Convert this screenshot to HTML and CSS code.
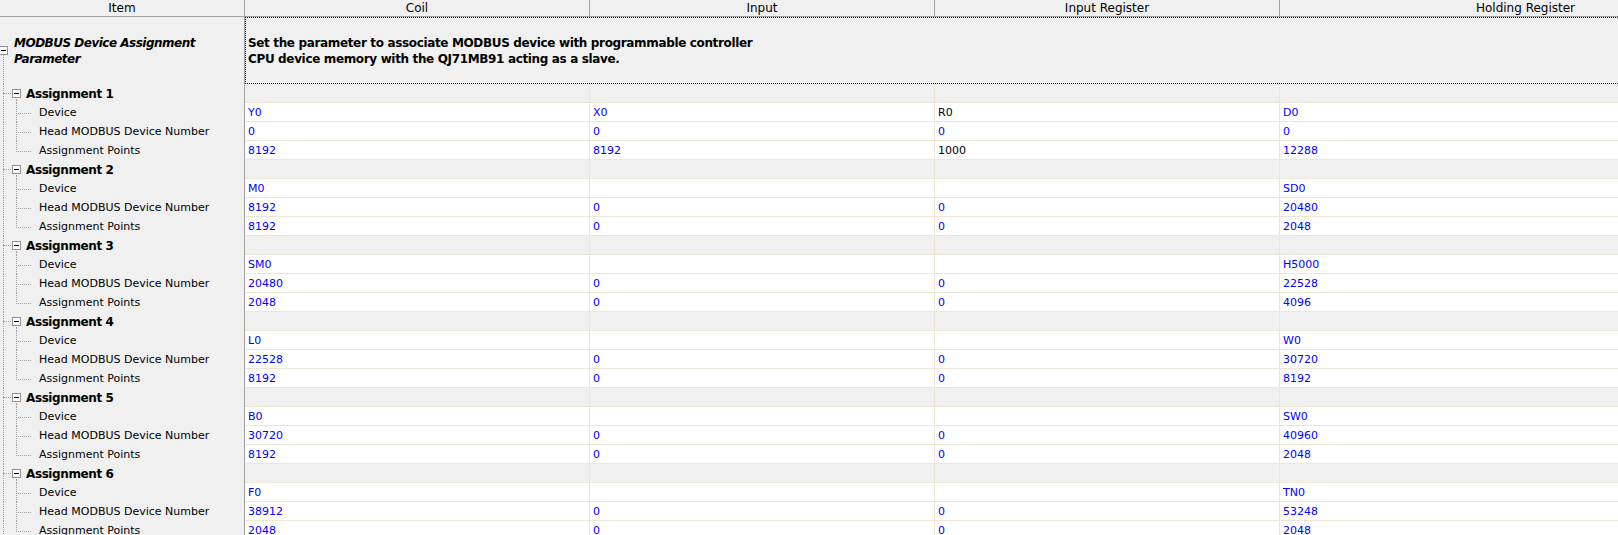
FILE: index.html
```html
<!DOCTYPE html>
<html lang="en">
<head>
  <meta charset="UTF-8" />
  <title>MODBUS Device Assignment Parameter</title>
  <link rel="stylesheet" href="styles.css">
</head>
<body>

  <div class="view">
    <div class="grid" id="grid">
      <!-- column headers -->
      <div class="head">Item</div>
      <div class="head">Coil</div>
      <div class="head">Input</div>
      <div class="head">Input Register</div>
      <div class="head">Holding Register</div>

      <!-- parameter title row -->
      <div class="item root">
        <span class="toggle"></span>
        <span class="root-label">MODBUS Device Assignment<br>Parameter</span>
      </div>
      <div class="desc">
        <span>Set the parameter to associate MODBUS device with programmable controller<br>CPU device memory with the QJ71MB91 acting as a slave.</span>
      </div>
    </div>
  </div>

<script>
  const LABELS = ['Device', 'Head MODBUS Device Number', 'Assignment Points'];

  // one entry per assignment: device / head number / points, each as coil, input, input reg, holding
  const ASSIGNMENTS = [
    [['Y0', 'X0', 'R0', 'D0'], ['0', '0', '0', '0'], ['8192', '8192', '1000', '12288']],
    [['M0', '', '', 'SD0'], ['8192', '0', '0', '20480'], ['8192', '0', '0', '2048']],
    [['SM0', '', '', 'H5000'], ['20480', '0', '0', '22528'], ['2048', '0', '0', '4096']],
    [['L0', '', '', 'W0'], ['22528', '0', '0', '30720'], ['8192', '0', '0', '8192']],
    [['B0', '', '', 'SW0'], ['30720', '0', '0', '40960'], ['8192', '0', '0', '2048']],
    [['F0', '', '', 'TN0'], ['38912', '0', '0', '53248'], ['2048', '0', '0', '2048']],
  ];

  // cells still at the module default are drawn in black
  const DEFAULTS = ['0-0-2', '0-2-2'];

  const grid = document.getElementById('grid');

  function add(cls, text) {
    const el = document.createElement('div');
    el.className = cls;
    if (text) el.textContent = text;
    grid.appendChild(el);
    return el;
  }

  ASSIGNMENTS.forEach((rows, a) => {
    // group row
    const g = add('item group', 'Assignment ' + (a + 1));
    const t = document.createElement('span');
    t.className = 'toggle';
    g.prepend(t);
    for (let c = 0; c < 4; c++) add('cell blank');

    // child rows
    rows.forEach((vals, r) => {
      add('item child' + (r === rows.length - 1 ? ' last' : ''), LABELS[r]);
      vals.forEach((v, c) => {
        const plain = DEFAULTS.includes(a + '-' + r + '-' + c);
        add('cell' + (plain ? ' plain' : ''), v);
      });
    });
  });
</script>

</body>
</html>
```

FILE: styles.css
```css
body {
  margin: 0;
  overflow: hidden;
  background: #fff;
  color: #000;
  font-family: "DejaVu Sans", Tahoma, sans-serif;
  font-size: 11px;
}
/* the grid is wider than the window; the rest is scrolled off */
.view {
  width: 100vw;
  height: 100vh;
  overflow: hidden;
}
.grid {
  display: grid;
  grid-template-columns: 245px 345px 345px 345px 492px;
  width: 1772px;
}
.grid > div {
  box-sizing: border-box;
  white-space: nowrap;
}

/* column headers */
.head {
  height: 17px;
  line-height: 16px;
  text-align: center;
  background: #f0f0f0;
  border-right: 1px solid #a0a0a0;
  border-bottom: 1px solid #a0a0a0;
  font-size: 12px;
}

/* tree column */
.item {
  position: relative;
  height: 19px;
  line-height: 20px;
  background: #f0f0f0;
  border-right: 1px solid #a0a0a0;
}
.item::before {
  /* outer spine */
  content: '';
  position: absolute;
  left: 3px;
  top: 0;
  bottom: 0;
  border-left: 1px dotted #a0a0a0;
}
.root {
  height: 67px;
  display: flex;
  align-items: center;
  padding-left: 14px;
  padding-top: 1px;
}
.root::before {
  top: 38px;
}
.root-label {
  font-weight: bold;
  font-style: italic;
  font-size: 12px;
  line-height: 16px;
  letter-spacing: -0.5px;
}
.group {
  padding-left: 26px;
  font-weight: bold;
  font-size: 12px;
  letter-spacing: -0.4px;
}
.group::after {
  /* inner spine below the box */
  content: '';
  position: absolute;
  left: 16px;
  top: 15px;
  bottom: 0;
  border-left: 1px dotted #a0a0a0;
}
.child {
  padding-left: 39px;
  background: repeating-linear-gradient(to right, #a0a0a0 0 1px, transparent 1px 2px) 18px 10px / 13px 1px no-repeat, #f0f0f0;
}
.child::after {
  content: '';
  position: absolute;
  left: 16px;
  top: 0;
  bottom: 0;
  border-left: 1px dotted #a0a0a0;
}
.child.last::after {
  bottom: auto;
  height: 11px;
}

/* expand / collapse box */
.toggle {
  position: absolute;
  left: 12px;
  top: 5px;
  width: 9px;
  height: 9px;
  box-sizing: border-box;
  border: 1px solid #919191;
  background: linear-gradient(#000, #000) center / 5px 1px no-repeat, #fff;
}
.toggle::before {
  content: '';
  position: absolute;
  left: -10px;
  top: 3px;
  width: 8px;
  border-top: 1px dotted #a0a0a0;
}
.root .toggle {
  left: -1px;
  top: 29px;
}
.root .toggle::before {
  display: none;
}

/* description block */
.desc {
  grid-column: 2 / -1;
  display: flex;
  align-items: center;
  padding-left: 2px;
  padding-top: 1px;
  background: #f0f0f0;
  border: 1px dotted #000;
  font-weight: bold;
  font-size: 12px;
  line-height: 16px;
  letter-spacing: -0.35px;
}

/* value cells */
.cell {
  height: 19px;
  line-height: 20px;
  padding-left: 3px;
  background: #fff;
  color: #00f;
  border-right: 1px solid #ebe6d5;
  border-bottom: 1px solid #ebe6d5;
}
.cell.blank {
  background: #f0f0f0;
}
.cell.plain {
  color: #000;
}
```
